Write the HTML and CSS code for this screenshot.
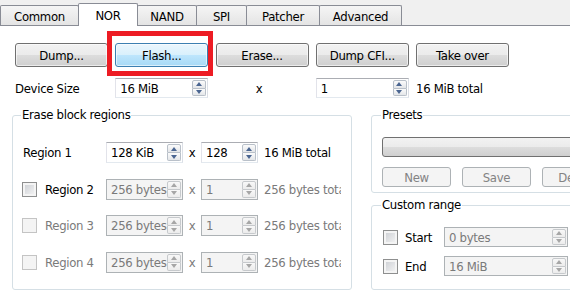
FILE: index.html
```html
<!DOCTYPE html>
<html>
<head>
<meta charset="UTF-8">
<title>NOR</title>
<link rel="stylesheet" href="styles.css">
</head>
<body>
<div class="tabbar">
  <div class="tab w-common">Common</div>
  <div class="tab current w-nor">NOR</div>
  <div class="tab w-nand">NAND</div>
  <div class="tab w-spi">SPI</div>
  <div class="tab w-patcher">Patcher</div>
  <div class="tab w-advanced">Advanced</div>
</div>

<div class="pane">
  <div class="actions">
    <button class="btn">Dump...</button>
    <button class="btn hot">Flash...</button>
    <button class="btn">Erase...</button>
    <button class="btn">Dump CFI...</button>
    <button class="btn">Take over</button>
  </div>

  <div class="device-row">
    <span class="cell">Device Size</span>
    <div class="spin cell"><span class="val">16 MiB</span><span class="arrows"><i class="up"></i><i class="down"></i></span></div>
    <span class="cell times">x</span>
    <div class="spin cell"><span class="val">1</span><span class="arrows"><i class="up"></i><i class="down"></i></span></div>
    <span>16 MiB total</span>
  </div>

  <div class="columns">
    <fieldset class="group erase">
      <legend>Erase block regions</legend>
      <div class="region">
        <span class="name plain">Region 1</span>
        <div class="spin tall"><span class="val">128 KiB</span><span class="arrows"><i class="up"></i><i class="down"></i></span></div>
        <span class="times">x</span>
        <div class="spin tall"><span class="val">128</span><span class="arrows"><i class="up"></i><i class="down"></i></span></div>
        <span class="total">16 MiB total</span>
      </div>
      <div class="region">
        <span class="name"><span class="check"></span>Region 2</span>
        <div class="spin tall off"><span class="val">256 bytes</span><span class="arrows"><i class="up"></i><i class="down"></i></span></div>
        <span class="times dim">x</span>
        <div class="spin tall off"><span class="val">1</span><span class="arrows"><i class="up"></i><i class="down"></i></span></div>
        <span class="total dim">256 bytes total</span>
      </div>
      <div class="region">
        <span class="name dim"><span class="check off"></span>Region 3</span>
        <div class="spin tall off"><span class="val">256 bytes</span><span class="arrows"><i class="up"></i><i class="down"></i></span></div>
        <span class="times dim">x</span>
        <div class="spin tall off"><span class="val">1</span><span class="arrows"><i class="up"></i><i class="down"></i></span></div>
        <span class="total dim">256 bytes total</span>
      </div>
      <div class="region">
        <span class="name dim"><span class="check off"></span>Region 4</span>
        <div class="spin tall off"><span class="val">256 bytes</span><span class="arrows"><i class="up"></i><i class="down"></i></span></div>
        <span class="times dim">x</span>
        <div class="spin tall off"><span class="val">1</span><span class="arrows"><i class="up"></i><i class="down"></i></span></div>
        <span class="total dim">256 bytes total</span>
      </div>
    </fieldset>

    <div class="side">
      <fieldset class="group presets">
        <legend>Presets</legend>
        <div class="combo"></div>
        <div class="preset-buttons">
          <button class="btn small" disabled>New</button>
          <button class="btn small" disabled>Save</button>
          <button class="btn small" disabled>Delete</button>
        </div>
      </fieldset>

      <fieldset class="group custom">
        <legend>Custom range</legend>
        <div class="range-row">
          <span class="check"></span>
          <span class="range-label">Start</span>
          <div class="spin off wide"><span class="val">0 bytes</span><span class="arrows"><i class="up"></i><i class="down"></i></span></div>
        </div>
        <div class="range-row">
          <span class="check"></span>
          <span class="range-label">End</span>
          <div class="spin off wide"><span class="val">16 MiB</span><span class="arrows"><i class="up"></i><i class="down"></i></span></div>
        </div>
      </fieldset>
    </div>
  </div>
</div>

<div class="highlight"></div>
</body>
</html>
```

FILE: styles.css
```css
* {
  box-sizing: border-box;
}

body {
  margin: 0;
  width: 570px;
  height: 300px;
  overflow: hidden;
  position: relative;
  background: #f0f0f0;
  color: #000;
  font-family: "DejaVu Sans Condensed", "DejaVu Sans", sans-serif;
  font-size: 13px;
  letter-spacing: -0.3px;
}

/* tabs */
.tabbar {
  display: flex;
  align-items: flex-end;
  height: 25px;
}

.tab {
  height: 20px;
  margin-left: -1px;
  padding-top: 3px;
  border: 1px solid #898c95;
  border-bottom: none;
  border-radius: 2px 2px 0 0;
  background: linear-gradient(#f5f5f5, #e4e4e4);
  text-align: center;
  line-height: 16px;
}

.tab:first-child {
  margin-left: 0;
}

.tab.current {
  height: 23px;
  margin-bottom: -1px;
  padding-top: 4px;
  background: #fff;
  position: relative;
  z-index: 1;
}

.w-common { width: 79px; }
.w-nor { width: 60px; }
.w-nand { width: 60px; }
.w-spi { width: 51px; }
.w-patcher { width: 74px; }
.w-advanced { width: 83px; }

.pane {
  height: 275px;
  background: #fff;
  border-top: 1px solid #898c95;
}

/* buttons */
.actions {
  display: flex;
  gap: 7.25px;
  padding: 17px 0 0 15px;
}

.btn {
  width: 93px;
  height: 24px;
  padding: 0;
  border: 1px solid #707070;
  border-radius: 3px;
  background: linear-gradient(#f2f2f2, #ebebeb 50%, #dddddd 50%, #cfcfcf);
  box-shadow: inset 0 0 0 1px rgba(255, 255, 255, 0.6);
  font: inherit;
  letter-spacing: inherit;
  color: #000;
}

.btn.hot {
  border-color: #3c7fb1;
  background: linear-gradient(#eaf6fd, #d9f0fc 50%, #bee6fd 50%, #a7d9f5);
}

.btn:disabled {
  border-color: #adb2b5;
  background: #f4f4f4;
  box-shadow: none;
  color: #838383;
}

.btn.small {
  width: 69px;
  height: 20px;
  flex: none;
}

/* device size row */
.device-row {
  display: flex;
  align-items: center;
  gap: 7.25px;
  margin-top: 11px;
  padding-left: 15px;
}

.cell {
  width: 93px;
  flex: none;
}

.device-row .times {
  text-align: center;
  padding-right: 6px;
}

/* spin boxes */
.spin {
  display: flex;
  height: 20px;
  padding: 1px;
  border: 1px solid;
  border-color: #abadb3 #dbdfe6 #e3e9ef #e2e3ea;
  background: #fff;
}

.spin.tall {
  height: 21px;
}

.spin .val {
  flex: 1;
  padding-left: 3px;
  overflow: hidden;
  white-space: nowrap;
  line-height: 17px;
}

.arrows {
  display: flex;
  flex-direction: column;
  width: 14px;
  flex: none;
}

.arrows i {
  flex: 1;
  position: relative;
  border: 1px solid #b9c0c9;
  background: linear-gradient(#fbfbfb, #e4e6e9);
}

.arrows i.up {
  border-radius: 2px 2px 0 0;
}

.arrows i.down {
  border-top: none;
  border-radius: 0 0 2px 2px;
}

.arrows i::after {
  content: "";
  position: absolute;
  left: 50%;
  top: 50%;
  margin: -2px 0 0 -3.5px;
  border-style: solid;
  border-color: transparent;
}

.arrows i.up::after {
  border-width: 0 3.5px 4px;
  border-bottom-color: #4a6591;
}

.arrows i.down::after {
  border-width: 4px 3.5px 0;
  border-top-color: #4a6591;
}

.spin.off {
  border-color: #adb2b5;
  background: #f4f4f4;
  color: #7a7a7a;
}

.spin.off .arrows i {
  border-color: #c6c9cc;
  background: linear-gradient(#f8f8f8, #ececec);
}

.spin.off .arrows i.up::after {
  border-bottom-color: #a6a6a6;
}

.spin.off .arrows i.down::after {
  border-top-color: #a6a6a6;
}

/* group boxes */
.columns {
  display: flex;
  gap: 19px;
  margin-top: 10px;
  padding-left: 12px;
}

.group {
  margin: 0;
  border: 1px solid #d5dfe5;
  border-radius: 3px;
  min-width: 0;
}

.group legend {
  margin-left: -1px;
  padding: 0 1px;
  line-height: 14px;
}

.erase {
  width: 340px;
  flex: none;
  display: flex;
  flex-direction: column;
  gap: 15.67px;
  padding: 20px 9px 16px 9px;
}

.region {
  display: grid;
  grid-template-columns: 84px 77px 18px 57px 83px;
  align-items: center;
}

.name {
  display: flex;
  align-items: center;
  gap: 8px;
}

.name.plain {
  padding-left: 1px;
}

.region .times {
  text-align: center;
}

.total {
  margin-left: 6px;
  overflow: hidden;
  white-space: nowrap;
}

.dim {
  color: #7a7a7a;
}

.check {
  width: 15px;
  height: 15px;
  flex: none;
  border: 1px solid #8e8f8f;
  background: linear-gradient(135deg, #c9ccd1, #f7f7f7);
  box-shadow: inset 0 0 0 2px #f4f4f4;
}

.check.off {
  border-color: #c4c4c4;
  background: #f4f4f4;
  box-shadow: none;
}

.side {
  width: 220px;
  flex: none;
  display: flex;
  flex-direction: column;
  gap: 5px;
}

.presets {
  padding: 15px 0 5px 10px;
}

.combo {
  height: 20px;
  border: 1px solid #707070;
  border-radius: 3px;
  background: linear-gradient(#f2f2f2, #ebebeb 50%, #dddddd 50%, #cfcfcf);
}

.preset-buttons {
  display: flex;
  gap: 11px;
  margin-top: 10px;
}

.custom {
  display: flex;
  flex-direction: column;
  gap: 9px;
  padding: 15px 0 13px 11px;
}

.custom legend {
  margin-left: -2px;
}

.range-row {
  display: flex;
  align-items: center;
}

.range-label {
  width: 46px;
  padding-left: 7px;
}

.spin.wide {
  width: 124px;
}

/* red marker round the Flash button */
.highlight {
  position: absolute;
  left: 107px;
  top: 31px;
  width: 106px;
  height: 45px;
  border: 5px solid #ed1c24;
}
```
